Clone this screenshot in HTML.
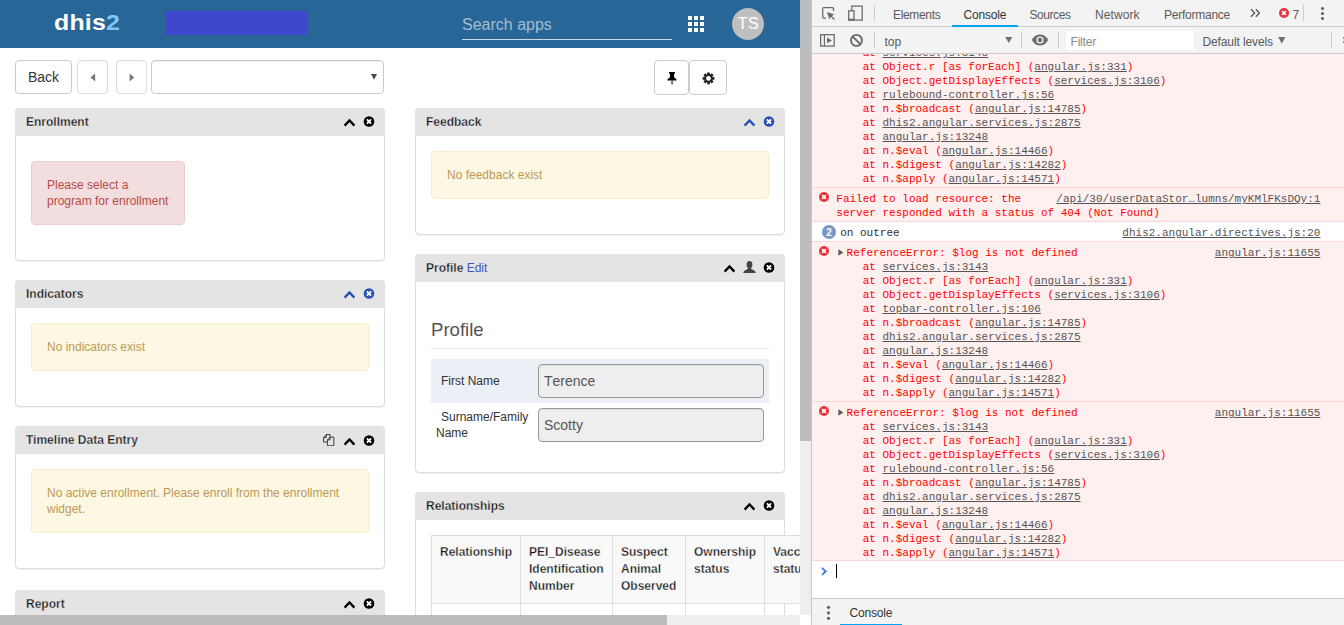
<!DOCTYPE html>
<html>
<head>
<meta charset="utf-8">
<title>Tracker Capture</title>
<style>
*{box-sizing:border-box;}
html,body{margin:0;padding:0;}
body{width:1344px;height:625px;overflow:hidden;position:relative;background:#fff;font-family:"Liberation Sans",sans-serif;font-size:12px;color:#333;}
#page{position:absolute;left:0;top:0;width:800px;height:615px;overflow:hidden;background:#fff;}
#hdr{position:absolute;left:0;top:0;width:800px;height:48px;background:#276696;}
#logo{position:absolute;left:54px;top:9.5px;font-weight:bold;font-size:22.5px;line-height:26px;color:#fff;letter-spacing:0.2px;transform:scaleX(1.105);transform-origin:0 0;white-space:nowrap;}
#logo span{color:#80c5f7;letter-spacing:0;}
#redact{position:absolute;left:166px;top:11px;width:142px;height:24px;background:#3f48cc;}
#search{position:absolute;left:462px;top:15px;font-size:16px;line-height:20px;color:#a3bdd1;}
#sline{position:absolute;left:462px;top:39px;width:210px;height:1px;background:#c9d9e5;}
#grid{position:absolute;left:688px;top:16px;}
#avatar{position:absolute;left:732px;top:8px;width:32px;height:32px;border-radius:50%;background:#bfbfbf;color:#fff;font-size:16px;line-height:32px;text-align:center;letter-spacing:0.6px;padding-left:1px;}
.btn{position:absolute;top:60px;height:34px;border:1px solid #ccc;border-radius:4px;background:#fff;font-size:14px;line-height:20px;color:#333;text-align:center;padding-top:6px;}
.wdg{position:absolute;width:370px;border:1px solid #ddd;border-radius:4px;background:#fff;box-shadow:0 1px 1px rgba(0,0,0,.05);}
.wh{-webkit-text-stroke:0.3px #e4e4e4;position:absolute;left:-1px;top:-1px;width:370px;height:28px;background:#e4e4e4;border-radius:4px 4px 0 0;font-weight:bold;font-size:12px;line-height:28px;padding-left:11px;color:#151515;}
.wh a{-webkit-text-stroke:0;font-weight:normal;color:#3e58c2;}
.alert{position:absolute;border:1px solid #faebcc;background:#fcf8e3;color:#c09853;border-radius:4px;padding:15px;font-size:12px;line-height:16px;}
.alert.dng{border-color:#ebccd1;background:#f2dede;color:#b94a48;}
.ico{position:absolute;top:0;}
.inp{font-kerning:none;position:absolute;left:122px;width:226px;height:34px;border:1px solid #999;border-radius:4px;background:#eee;color:#555;font-size:14px;line-height:20px;padding:6px 5px;box-shadow:inset 0 1px 1px rgba(0,0,0,.075);}
#tbl{position:absolute;left:431px;top:535px;width:400px;height:100px;}
.th{-webkit-text-stroke:0.3px #f9f9f9;position:absolute;top:0;height:69px;border:1px solid #ddd;border-right:none;background:#f9f9f9;font-weight:bold;font-size:12px;line-height:17px;padding:8px;color:#151515;}
.td{position:absolute;top:68px;height:40px;border:1px solid #ddd;border-right:none;background:#fff;}
#vs{position:absolute;left:800px;top:0;width:12px;height:615px;background:#eee;}
#vst{position:absolute;left:0;top:0;width:12px;height:441px;background:#bcbcbc;}
#hs{position:absolute;left:0;top:615px;width:800px;height:10px;background:#eee;}
#hst{position:absolute;left:0;top:0;width:667px;height:10px;background:#bcbcbc;}
#hcorner{position:absolute;left:800px;top:615px;width:12px;height:10px;background:#fff;}
#dt{position:absolute;left:811px;top:0;width:533px;height:625px;background:#fff;border-left:1px solid #c8c8c8;overflow:hidden;}
#tb1{position:absolute;left:0;top:0;width:532px;height:27px;background:#f3f3f3;border-bottom:1px solid #ccc;}
#tb2{position:absolute;left:0;top:27px;width:532px;height:27px;background:#f3f3f3;border-bottom:1px solid #ccc;}
#msgs{position:absolute;left:0;top:0;width:532px;height:598px;background:#fff;overflow:hidden;}
#dr{position:absolute;left:0;top:598px;width:532px;height:27px;background:#f3f3f3;border-top:1px solid #ccc;}
.sep{position:absolute;width:1px;height:16px;background:#ccc;}
.tab{position:absolute;top:7.5px;font-size:12px;line-height:14px;color:#5a5a5a;white-space:pre;}
.tab.sel{color:#333;}
.t2{position:absolute;top:7.5px;font-size:12px;line-height:14px;color:#5a5a5a;white-space:pre;}
#ul{position:absolute;left:140px;top:25px;width:66px;height:2px;background:#03a3f5;}
#flt{position:absolute;left:254px;top:4px;width:128px;height:19px;background:#fff;}
.m{position:absolute;left:0;width:532px;border-top:1px solid #ffd6d6;border-bottom:1px solid #ffd6d6;}
.m.e{background:#fff0f0;color:#ff0000;}
.m.i{background:#fff;color:#303030;}
.m pre{margin:0;position:absolute;font-family:"Liberation Mono",monospace;font-size:11px;line-height:14px;}
.m pre.st{left:24.3px;}
.m pre.lk{right:23.6px;}
.m u{color:#545454;}
.ei{position:absolute;left:7px;top:4px;}
.ar{position:absolute;left:26px;top:7px;}
.bd{position:absolute;left:10px;top:3px;width:14px;height:14px;border-radius:7px;background:#7b97c4;color:#fff;font-size:10px;line-height:15px;text-align:center;font-weight:bold;overflow:hidden;}
</style>
</head>
<body>
<div id="page">
  <div id="hdr">
    <div id="logo">dhis<span>2</span></div>
    <div id="redact"></div>
    <div id="search">Search apps</div>
    <div id="sline"></div>
    <svg id="grid" width="16" height="16" viewBox="0 0 16 16"><g fill="#fff"><rect x="0" y="0" width="4" height="4"/><rect x="6" y="0" width="4" height="4"/><rect x="12" y="0" width="4" height="4"/><rect x="0" y="6" width="4" height="4"/><rect x="6" y="6" width="4" height="4"/><rect x="12" y="6" width="4" height="4"/><rect x="0" y="12" width="4" height="4"/><rect x="6" y="12" width="4" height="4"/><rect x="12" y="12" width="4" height="4"/></g></svg>
    <div id="avatar">TS</div>
  </div>
  <div class="btn" style="left:15px;width:57px;">Back</div>
  <div class="btn" style="left:77px;width:31px;border-color:#ddd;"><svg style="position:absolute;left:12px;top:11.5px" width="6" height="9" viewBox="0 0 6 9"><path d="M5.1 0.4 L5.1 8.4 L0.5 4.4 Z" fill="#777"/></svg></div>
  <div class="btn" style="left:116px;width:31px;border-color:#ddd;"><svg style="position:absolute;left:12px;top:11.5px" width="6" height="9" viewBox="0 0 6 9"><path d="M0.6 0.4 L0.6 8.4 L5.2 4.4 Z" fill="#777"/></svg></div>
  <div class="btn" style="left:151px;width:233px;border-color:#ccc;box-shadow:inset 0 1px 1px rgba(0,0,0,.075);"><svg style="position:absolute;right:6px;top:13px" width="6" height="6" viewBox="0 0 6 6"><path d="M0 0 L6 0 L3 5.8 Z" fill="#4a4a4a"/></svg></div>
  <div class="btn" style="left:654px;width:35px;height:35px;"><svg style="position:absolute;left:12px;top:11px" width="10" height="14" viewBox="0 0 10 14"><path d="M2 0 H8 V1.5 H7.1 V5.4 C8.6 6 9.6 7 9.6 8.4 H0.4 C0.4 7 1.4 6 2.9 5.4 V1.5 H2 Z" fill="#000"/><path d="M4.5 8.4 H5.6 V12 L5.05 12.9 L4.5 12 Z" fill="#111"/></svg></div>
  <div class="btn" style="left:689px;width:38px;height:35px;"><svg style="position:absolute;left:12px;top:11px" width="13" height="13" viewBox="0 0 13 13"><g transform="translate(6.5 6.4)"><g fill="#222"><rect x="-1.35" y="-5.9" width="2.7" height="11.8"/><rect x="-1.35" y="-5.9" width="2.7" height="11.8" transform="rotate(45)"/><rect x="-1.35" y="-5.9" width="2.7" height="11.8" transform="rotate(90)"/><rect x="-1.35" y="-5.9" width="2.7" height="11.8" transform="rotate(135)"/></g><circle r="4.2" fill="#222"/><circle r="2.4" fill="#fff"/></g></svg></div>

  <!-- LEFT COLUMN -->
  <div class="wdg" style="left:15px;top:108px;height:153px;">
    <div class="wh">Enrollment<svg class="ico" style="left:328px;top:10px" width="13" height="9" viewBox="0 0 13 9"><path d="M1.6 7.6 L6.5 2.4 L11.4 7.6" fill="none" stroke="#000" stroke-width="2.3"/></svg><svg class="ico" style="left:348px;top:8px" width="12" height="12" viewBox="0 0 12 12"><circle cx="6" cy="5.5" r="5.3" fill="#000"/><path d="M3.9 3.4 L8.1 7.6 M8.1 3.4 L3.9 7.6" stroke="#fff" stroke-width="1.9"/></svg></div>
    <div class="alert dng" style="left:15px;top:52px;width:154px;height:64px;">Please select a program for enrollment</div>
  </div>
  <div class="wdg" style="left:15px;top:280px;height:127px;">
    <div class="wh">Indicators<svg class="ico" style="left:328px;top:10px" width="13" height="9" viewBox="0 0 13 9"><path d="M1.6 7.6 L6.5 2.4 L11.4 7.6" fill="none" stroke="#2a50b8" stroke-width="2.3"/></svg><svg class="ico" style="left:348px;top:8px" width="12" height="12" viewBox="0 0 12 12"><circle cx="6" cy="5.5" r="5.3" fill="#2a50b8"/><path d="M3.9 3.4 L8.1 7.6 M8.1 3.4 L3.9 7.6" stroke="#fff" stroke-width="1.9"/></svg></div>
    <div class="alert" style="left:15px;top:42px;width:338px;height:48px;">No indicators exist</div>
  </div>
  <div class="wdg" style="left:15px;top:426px;height:143px;">
    <div class="wh">Timeline Data Entry<svg class="ico" style="left:308px;top:8px" width="12.4" height="12.4" viewBox="0 0 13 13"><path d="M3.5 0.6 H7.4 V3 M3.5 0.6 L0.6 3.6 V8.4 H4.4 M0.6 3.6 H3.5 V0.6" fill="none" stroke="#333" stroke-width="1"/><path d="M7.4 3.2 H11.4 V12.3 H4.6 V6.2 Z M4.6 6.2 H7.4 V3.2" fill="none" stroke="#333" stroke-width="1"/></svg><svg class="ico" style="left:328px;top:11px" width="13" height="9" viewBox="0 0 13 9"><path d="M1.6 7.6 L6.5 2.4 L11.4 7.6" fill="none" stroke="#000" stroke-width="2.3"/></svg><svg class="ico" style="left:348px;top:9px" width="12" height="12" viewBox="0 0 12 12"><circle cx="6" cy="5.5" r="5.3" fill="#000"/><path d="M3.9 3.4 L8.1 7.6 M8.1 3.4 L3.9 7.6" stroke="#fff" stroke-width="1.9"/></svg></div>
    <div class="alert" style="left:15px;top:42px;width:338px;height:64px;">No active enrollment. Please enroll from the enrollment widget.</div>
  </div>
  <div class="wdg" style="left:15px;top:590px;height:100px;">
    <div class="wh">Report<svg class="ico" style="left:328px;top:10px" width="13" height="9" viewBox="0 0 13 9"><path d="M1.6 7.6 L6.5 2.4 L11.4 7.6" fill="none" stroke="#000" stroke-width="2.3"/></svg><svg class="ico" style="left:348px;top:8px" width="12" height="12" viewBox="0 0 12 12"><circle cx="6" cy="5.5" r="5.3" fill="#000"/><path d="M3.9 3.4 L8.1 7.6 M8.1 3.4 L3.9 7.6" stroke="#fff" stroke-width="1.9"/></svg></div>
  </div>

  <!-- RIGHT COLUMN -->
  <div class="wdg" style="left:415px;top:108px;height:127px;">
    <div class="wh">Feedback<svg class="ico" style="left:328px;top:10px" width="13" height="9" viewBox="0 0 13 9"><path d="M1.6 7.6 L6.5 2.4 L11.4 7.6" fill="none" stroke="#2a50b8" stroke-width="2.3"/></svg><svg class="ico" style="left:348px;top:8px" width="12" height="12" viewBox="0 0 12 12"><circle cx="6" cy="5.5" r="5.3" fill="#2a50b8"/><path d="M3.9 3.4 L8.1 7.6 M8.1 3.4 L3.9 7.6" stroke="#fff" stroke-width="1.9"/></svg></div>
    <div class="alert" style="left:15px;top:42px;width:338px;height:48px;">No feedback exist</div>
  </div>
  <div class="wdg" style="left:415px;top:254px;height:219px;">
    <div class="wh">Profile <a>Edit</a><svg class="ico" style="left:308px;top:10px" width="13" height="9" viewBox="0 0 13 9"><path d="M1.6 7.6 L6.5 2.4 L11.4 7.6" fill="none" stroke="#000" stroke-width="2.3"/></svg><svg class="ico" style="left:328px;top:7px" width="13" height="12" viewBox="0 0 13 12"><path d="M6.5 0 C8.4 0 9.4 1.5 9.4 3.4 C9.4 5 8.8 6.3 8 7 V7.8 C9.5 8.6 12 9.6 12.6 11 V12 H0.4 V11 C1 9.6 3.5 8.6 5 7.8 V7 C4.2 6.3 3.6 5 3.6 3.4 C3.6 1.5 4.6 0 6.5 0 Z" fill="#444"/></svg><svg class="ico" style="left:348px;top:8px" width="12" height="12" viewBox="0 0 12 12"><circle cx="6" cy="5.5" r="5.3" fill="#000"/><path d="M3.9 3.4 L8.1 7.6 M8.1 3.4 L3.9 7.6" stroke="#fff" stroke-width="1.9"/></svg></div>
    <div style="position:absolute;left:15px;top:63px;font-size:18.6px;line-height:24px;color:#555;">Profile</div>
    <div style="position:absolute;left:15px;top:93px;width:338px;height:1px;background:#e5e5e5;"></div>
    <div style="position:absolute;left:15px;top:104px;width:338px;height:44px;background:#ebf0f6;"></div>
    <div style="position:absolute;left:25px;top:118px;line-height:16px;">First Name</div>
    <div class="inp" style="top:109px;">Terence</div>
    <div style="position:absolute;left:20px;top:154px;line-height:16px;width:110px;text-indent:5px;">Surname/Family<br>Name</div>
    <div class="inp" style="top:153px;">Scotty</div>
  </div>
  <div class="wdg" style="left:415px;top:492px;height:300px;">
    <div class="wh">Relationships<svg class="ico" style="left:328px;top:10px" width="13" height="9" viewBox="0 0 13 9"><path d="M1.6 7.6 L6.5 2.4 L11.4 7.6" fill="none" stroke="#000" stroke-width="2.3"/></svg><svg class="ico" style="left:348px;top:8px" width="12" height="12" viewBox="0 0 12 12"><circle cx="6" cy="5.5" r="5.3" fill="#000"/><path d="M3.9 3.4 L8.1 7.6 M8.1 3.4 L3.9 7.6" stroke="#fff" stroke-width="1.9"/></svg></div>
  </div>
  <div id="tbl">
    <div class="th" style="left:0;width:89px;">Relationship</div>
    <div class="th" style="left:89px;width:92px;">PEI<span style="-webkit-text-stroke:0">_</span>Disease Identification Number</div>
    <div class="th" style="left:181px;width:73px;">Suspect Animal Observed</div>
    <div class="th" style="left:254px;width:79px;">Ownership status</div>
    <div class="th" style="left:333px;width:120px;">Vaccination status</div>
    <div class="td" style="left:0;width:89px;"></div>
    <div class="td" style="left:89px;width:92px;"></div>
    <div class="td" style="left:181px;width:73px;"></div>
    <div class="td" style="left:254px;width:79px;"></div>
    <div class="td" style="left:333px;width:120px;"></div>
    <div style="position:absolute;left:353px;top:69px;width:1px;height:40px;background:#ddd;"></div>
  </div>
</div>
<div id="vs"><div id="vst"></div></div>
<div id="hs"><div id="hst"></div></div>
<div id="hcorner"></div>
<div id="dt">
<div id="msgs">
<div class="m e" style="top:41px;height:147px;"><pre class="st" style="top:4px">    at <u>services.js:3143</u>
    at Object.r [as forEach] (<u>angular.js:331</u>)
    at Object.getDisplayEffects (<u>services.js:3106</u>)
    at <u>rulebound-controller.js:56</u>
    at n.$broadcast (<u>angular.js:14785</u>)
    at <u>dhis2.angular.services.js:2875</u>
    at <u>angular.js:13248</u>
    at n.$eval (<u>angular.js:14466</u>)
    at n.$digest (<u>angular.js:14282</u>)
    at n.$apply (<u>angular.js:14571</u>)</pre></div>
<div class="m e" style="top:187px;height:35px;"><svg class="ei" width="10" height="10" viewBox="0 0 10 10"><circle cx="5" cy="5" r="5" fill="#e5343f"/><path d="M3.1 3.1 L6.9 6.9 M6.9 3.1 L3.1 6.9" stroke="#fff" stroke-width="1.5"/></svg><pre class="tx" style="left:24.3px;top:4px">Failed to load resource: the
server responded with a status of 404 (Not Found)</pre><pre class="lk" style="top:4px"><u>/api/30/userDataStor…lumns/myKMlFKsDQy:1</u></pre></div>
<div class="m i" style="top:221px;height:21px;"><div class="bd">2</div><pre class="tx" style="left:28.2px;top:4px;color:#303030">on outree</pre><pre class="lk" style="top:4px"><u>dhis2.angular.directives.js:20</u></pre></div>
<div class="m e" style="top:241px;height:161px;"><svg class="ei" width="10" height="10" viewBox="0 0 10 10"><circle cx="5" cy="5" r="5" fill="#e5343f"/><path d="M3.1 3.1 L6.9 6.9 M6.9 3.1 L3.1 6.9" stroke="#fff" stroke-width="1.5"/></svg><svg class="ar" width="6" height="7" viewBox="0 0 6 7"><path d="M0.3 0.2 L5.5 3.5 L0.3 6.8 Z" fill="#606060"/></svg><pre class="tx" style="left:34.6px;top:4px">ReferenceError: $log is not defined</pre><pre class="lk" style="top:4px"><u>angular.js:11655</u></pre><pre class="st" style="top:18px">    at <u>services.js:3143</u>
    at Object.r [as forEach] (<u>angular.js:331</u>)
    at Object.getDisplayEffects (<u>services.js:3106</u>)
    at <u>topbar-controller.js:106</u>
    at n.$broadcast (<u>angular.js:14785</u>)
    at <u>dhis2.angular.services.js:2875</u>
    at <u>angular.js:13248</u>
    at n.$eval (<u>angular.js:14466</u>)
    at n.$digest (<u>angular.js:14282</u>)
    at n.$apply (<u>angular.js:14571</u>)</pre></div>
<div class="m e" style="top:401px;height:160px;"><svg class="ei" width="10" height="10" viewBox="0 0 10 10"><circle cx="5" cy="5" r="5" fill="#e5343f"/><path d="M3.1 3.1 L6.9 6.9 M6.9 3.1 L3.1 6.9" stroke="#fff" stroke-width="1.5"/></svg><svg class="ar" width="6" height="7" viewBox="0 0 6 7"><path d="M0.3 0.2 L5.5 3.5 L0.3 6.8 Z" fill="#606060"/></svg><pre class="tx" style="left:34.6px;top:4px">ReferenceError: $log is not defined</pre><pre class="lk" style="top:4px"><u>angular.js:11655</u></pre><pre class="st" style="top:18px">    at <u>services.js:3143</u>
    at Object.r [as forEach] (<u>angular.js:331</u>)
    at Object.getDisplayEffects (<u>services.js:3106</u>)
    at <u>rulebound-controller.js:56</u>
    at n.$broadcast (<u>angular.js:14785</u>)
    at <u>dhis2.angular.services.js:2875</u>
    at <u>angular.js:13248</u>
    at n.$eval (<u>angular.js:14466</u>)
    at n.$digest (<u>angular.js:14282</u>)
    at n.$apply (<u>angular.js:14571</u>)</pre></div>
<svg style="position:absolute;left:9.4px;top:566.6px" width="7" height="9" viewBox="0 0 7 9"><path d="M1 0.9 L4.7 4.4 L1 7.9" fill="none" stroke="#3b78e7" stroke-width="1.8"/></svg>
<div style="position:absolute;left:24px;top:564px;width:1px;height:14px;background:#000;"></div>
</div>
<div id="tb1">
<svg style="position:absolute;left:9px;top:6px" width="16" height="16" viewBox="0 0 16 16"><path d="M12.5 4.9 V2.7 Q12.5 1.7 11.5 1.7 H2.7 Q1.7 1.7 1.7 2.7 V11 Q1.7 12 2.7 12 H5" fill="none" stroke="#686868" stroke-width="1.25"/><path d="M6 6.1 L13.4 8.6 L10.7 9.9 L13.9 13.1 L12.9 14 L9.8 10.8 L8.4 13.5 Z" fill="#686868"/></svg>
<svg style="position:absolute;left:35px;top:4px" width="17" height="18" viewBox="0 0 17 18"><path d="M4.8 6 V2 H15.2 V16 H8" fill="none" stroke="#686868" stroke-width="1.25"/><rect x="1.7" y="6.8" width="5.3" height="9.2" fill="none" stroke="#686868" stroke-width="1.25"/><rect x="1.1" y="14.7" width="6.5" height="1.9" fill="#686868"/></svg>
<div class="sep" style="left:62px;top:5px;"></div>
<div class="tab" style="left:81px;letter-spacing:-0.34px">Elements</div>
<div class="tab sel" style="left:151.5px;letter-spacing:-0.2px">Console</div>
<div class="tab" style="left:217.5px;letter-spacing:-0.44px">Sources</div>
<div class="tab" style="left:283px;letter-spacing:0.08px">Network</div>
<div class="tab" style="left:352px;letter-spacing:-0.24px">Performance</div>
<div id="ul"></div>
<svg style="position:absolute;left:438px;top:8px" width="11" height="10" viewBox="0 0 11 10"><path d="M1 1.2 L4.6 5 L1 8.8 M5.8 1.2 L9.4 5 L5.8 8.8" fill="none" stroke="#555" stroke-width="1.3"/></svg>
<svg style="position:absolute;left:467px;top:8px" width="10" height="10" viewBox="0 0 10 10"><circle cx="5" cy="5" r="5" fill="#e5343f"/><path d="M3.1 3.1 L6.9 6.9 M6.9 3.1 L3.1 6.9" stroke="#fff" stroke-width="1.5"/></svg>
<div class="tab" style="left:480.5px;color:#5a5a5a;letter-spacing:0">7</div>
<div class="sep" style="left:491px;top:5px;"></div>
<svg style="position:absolute;left:508px;top:6px" width="5" height="15" viewBox="0 0 5 15"><circle cx="2.5" cy="2.5" r="1.55" fill="#616161"/><circle cx="2.5" cy="7.5" r="1.55" fill="#616161"/><circle cx="2.5" cy="12.5" r="1.55" fill="#616161"/></svg>
</div>
<div id="tb2">
<svg style="position:absolute;left:8px;top:6px" width="16" height="14" viewBox="0 0 16 14"><rect x="0.6" y="1.7" width="13.6" height="11.4" fill="none" stroke="#686868" stroke-width="1.25"/><path d="M4.4 1.7 V13" stroke="#686868" stroke-width="1.2"/><path d="M7 4.6 L12 7.4 L7 10.2 Z" fill="#686868"/></svg>
<svg style="position:absolute;left:38px;top:7px" width="13" height="13" viewBox="0 0 13 13"><circle cx="6.5" cy="6.4" r="5.5" fill="none" stroke="#686868" stroke-width="1.8"/><path d="M2.7 2.6 L10.3 10.2" stroke="#686868" stroke-width="1.8"/></svg>
<div class="sep" style="left:62px;top:5px;"></div>
<div class="t2" style="left:72.5px;">top</div>
<svg style="position:absolute;left:193px;top:10px" width="8" height="6" viewBox="0 0 8 6"><path d="M0.3 0 L7.3 0 L3.8 6 Z" fill="#6e6e6e"/></svg>
<div class="sep" style="left:209px;top:5px;"></div>
<svg style="position:absolute;left:219px;top:7px" width="18" height="12" viewBox="0 0 18 12"><path d="M0.8 6 C3.5 1.4 6.4 0.6 9 0.6 C11.6 0.6 14.5 1.4 17.2 6 C14.5 10.6 11.6 11.4 9 11.4 C6.4 11.4 3.5 10.6 0.8 6 Z" fill="#6e6e6e"/><circle cx="9" cy="6" r="3.6" fill="#f3f3f3"/><circle cx="9" cy="6" r="2.2" fill="#6e6e6e"/></svg>
<div class="sep" style="left:246px;top:5px;"></div>
<div id="flt"></div><div class="t2" style="left:258.5px;color:#8a8a8a;letter-spacing:-0.2px">Filter</div>
<div class="t2" style="left:390.5px;letter-spacing:-0.12px">Default levels</div>
<svg style="position:absolute;left:466px;top:10px" width="8" height="7" viewBox="0 0 8 7"><path d="M0.2 0 L7.4 0 L3.8 6.6 Z" fill="#6e6e6e"/></svg>
<div class="sep" style="left:519px;top:5px;"></div>
<div style="position:absolute;left:531px;top:9.5px;width:3px;height:2.4px;border-radius:1.2px;background:#6e6e6e"></div><div style="position:absolute;left:531px;top:14px;width:3px;height:2.4px;border-radius:1.2px;background:#6e6e6e"></div>
</div>
<div id="dr"><svg style="position:absolute;left:14px;top:5.5px" width="5" height="16" viewBox="0 0 5 16"><circle cx="2.5" cy="2.3" r="1.6" fill="#616161"/><circle cx="2.5" cy="7.8" r="1.6" fill="#616161"/><circle cx="2.5" cy="13.3" r="1.6" fill="#616161"/></svg><div class="tab sel" style="left:37.5px;top:7px;letter-spacing:-0.2px">Console</div><div style="position:absolute;left:28px;top:25px;width:62px;height:2px;background:#03a3f5"></div></div>
</div>
</body>
</html>
